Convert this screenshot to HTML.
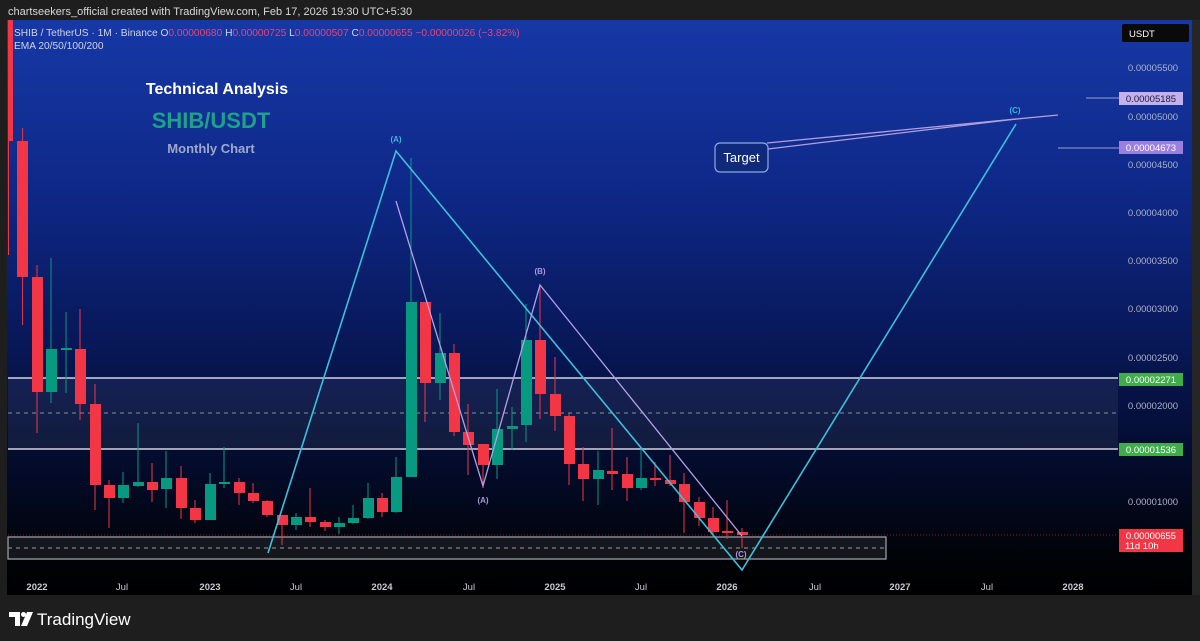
<!DOCTYPE html>
<html><head><meta charset="utf-8"><style>
html,body{margin:0;padding:0;background:#1e1e1e;width:1200px;height:641px;overflow:hidden;font-family:"Liberation Sans",sans-serif}
svg{position:absolute;left:0;top:0}
</style></head><body>
<svg width="1200" height="641" viewBox="0 0 1200 641" xmlns="http://www.w3.org/2000/svg" font-family="Liberation Sans, sans-serif">
<defs>
<linearGradient id="bg" x1="0" y1="0" x2="0" y2="1">
<stop offset="0" stop-color="#1638a6"/>
<stop offset="0.3" stop-color="#0e2887"/>
<stop offset="0.55" stop-color="#08185a"/>
<stop offset="0.8" stop-color="#030a26"/>
<stop offset="0.93" stop-color="#010308"/>
<stop offset="1" stop-color="#000"/>
</linearGradient>
</defs>
<rect x="0" y="0" width="1200" height="641" fill="#1e1e1e"/>
<text x="8" y="15" font-size="11" fill="#d8d8d8">chartseekers_official created with TradingView.com, Feb 17, 2026 19:30 UTC+5:30</text>
<rect x="7" y="20" width="1185" height="575" fill="url(#bg)"/>
<rect x="1192" y="20" width="8" height="575" fill="#262626"/>

<rect x="8" y="378" width="1110" height="71" fill="#ffffff" fill-opacity="0.06"/>
<line x1="8" y1="378" x2="1118" y2="378" stroke="#d0d4e0" stroke-width="1.6"/>
<line x1="8" y1="449" x2="1118" y2="449" stroke="#d0d4e0" stroke-width="1.6"/>
<line x1="8" y1="413" x2="1118" y2="413" stroke="#8a90a8" stroke-width="1" stroke-dasharray="4,4"/>
<rect x="8" y="537" width="878" height="22" fill="#ffffff" fill-opacity="0.08" stroke="#9a9ea8" stroke-width="1.3"/>
<line x1="8" y1="548" x2="886" y2="548" stroke="#9a9ea8" stroke-width="1" stroke-dasharray="4,4"/>
<line x1="8" y1="535" x2="1118" y2="535" stroke="#f23645" stroke-opacity="0.5" stroke-width="1" stroke-dasharray="1,2"/>

<g id="c">
<line x1="8.5" y1="20" x2="8.5" y2="255" stroke="#f23645"/><rect x="8" y="20" width="5" height="121" fill="#f23645"/>
<line x1="22.6" y1="128" x2="22.6" y2="325" stroke="#f23645"/><rect x="17" y="141" width="11" height="136" fill="#f23645"/>
<line x1="37" y1="265" x2="37" y2="433" stroke="#f23645"/><rect x="32" y="277" width="11" height="115" fill="#f23645"/>
<line x1="51" y1="258" x2="51" y2="403" stroke="#089981"/><rect x="46" y="349" width="11" height="43" fill="#089981"/>
<line x1="66" y1="312" x2="66" y2="393" stroke="#089981"/><rect x="61" y="348" width="11" height="2" fill="#089981"/>
<line x1="80" y1="309" x2="80" y2="420" stroke="#f23645"/><rect x="75" y="349" width="11" height="55" fill="#f23645"/>
<line x1="95" y1="384" x2="95" y2="510" stroke="#f23645"/><rect x="90" y="404" width="11" height="81" fill="#f23645"/>
<line x1="109" y1="480" x2="109" y2="528" stroke="#f23645"/><rect x="104" y="485" width="11" height="13" fill="#f23645"/>
<line x1="123" y1="472" x2="123" y2="503" stroke="#089981"/><rect x="118" y="485" width="11" height="13" fill="#089981"/>
<line x1="138" y1="423" x2="138" y2="487" stroke="#089981"/><rect x="133" y="482" width="11" height="4" fill="#089981"/>
<line x1="152" y1="463" x2="152" y2="502" stroke="#f23645"/><rect x="147" y="482" width="11" height="8" fill="#f23645"/>
<line x1="166" y1="451" x2="166" y2="508" stroke="#089981"/><rect x="161" y="478" width="11" height="11" fill="#089981"/>
<line x1="181" y1="466" x2="181" y2="519" stroke="#f23645"/><rect x="176" y="478" width="11" height="30" fill="#f23645"/>
<line x1="195" y1="500" x2="195" y2="523" stroke="#f23645"/><rect x="190" y="508" width="11" height="12" fill="#f23645"/>
<line x1="210" y1="473" x2="210" y2="520" stroke="#089981"/><rect x="205" y="484" width="11" height="36" fill="#089981"/>
<line x1="224" y1="447" x2="224" y2="488" stroke="#089981"/><rect x="219" y="482" width="11" height="2" fill="#089981"/>
<line x1="239" y1="478" x2="239" y2="505" stroke="#f23645"/><rect x="234" y="482" width="11" height="11" fill="#f23645"/>
<line x1="253" y1="483" x2="253" y2="503" stroke="#f23645"/><rect x="248" y="493" width="11" height="8" fill="#f23645"/>
<line x1="267" y1="500" x2="267" y2="517" stroke="#f23645"/><rect x="262" y="501" width="11" height="14" fill="#f23645"/>
<line x1="282" y1="515" x2="282" y2="545" stroke="#f23645"/><rect x="277" y="515" width="11" height="10" fill="#f23645"/>
<line x1="296" y1="513" x2="296" y2="530" stroke="#089981"/><rect x="291" y="517" width="11" height="8" fill="#089981"/>
<line x1="310" y1="488" x2="310" y2="527" stroke="#f23645"/><rect x="305" y="517" width="11" height="5" fill="#f23645"/>
<line x1="325" y1="520" x2="325" y2="531" stroke="#f23645"/><rect x="320" y="522" width="11" height="5" fill="#f23645"/>
<line x1="339" y1="517" x2="339" y2="534" stroke="#089981"/><rect x="334" y="523" width="11" height="4" fill="#089981"/>
<line x1="353" y1="505" x2="353" y2="524" stroke="#089981"/><rect x="348" y="518" width="11" height="5" fill="#089981"/>
<line x1="368" y1="483" x2="368" y2="519" stroke="#089981"/><rect x="363" y="498" width="11" height="20" fill="#089981"/>
<line x1="382" y1="493" x2="382" y2="517" stroke="#f23645"/><rect x="377" y="498" width="11" height="14" fill="#f23645"/>
<line x1="396" y1="457" x2="396" y2="513" stroke="#089981"/><rect x="391" y="477" width="11" height="35" fill="#089981"/>
<line x1="411" y1="158" x2="411" y2="477" stroke="#089981"/><rect x="406" y="302" width="11" height="175" fill="#089981"/>
<line x1="425" y1="303" x2="425" y2="422" stroke="#f23645"/><rect x="420" y="302" width="11" height="81" fill="#f23645"/>
<line x1="440" y1="313" x2="440" y2="400" stroke="#089981"/><rect x="435" y="353" width="11" height="30" fill="#089981"/>
<line x1="454" y1="344" x2="454" y2="436" stroke="#f23645"/><rect x="449" y="353" width="11" height="79" fill="#f23645"/>
<line x1="468" y1="404" x2="468" y2="475" stroke="#f23645"/><rect x="463" y="432" width="11" height="13" fill="#f23645"/>
<line x1="483" y1="444" x2="483" y2="488" stroke="#f23645"/><rect x="478" y="444" width="11" height="21" fill="#f23645"/>
<line x1="497" y1="389" x2="497" y2="479" stroke="#089981"/><rect x="492" y="429" width="11" height="36" fill="#089981"/>
<line x1="512" y1="407" x2="512" y2="450" stroke="#089981"/><rect x="507" y="426" width="11" height="3" fill="#089981"/>
<line x1="526" y1="304" x2="526" y2="442" stroke="#089981"/><rect x="521" y="340" width="11" height="85" fill="#089981"/>
<line x1="540" y1="285" x2="540" y2="419" stroke="#f23645"/><rect x="535" y="340" width="11" height="54" fill="#f23645"/>
<line x1="555" y1="357" x2="555" y2="431" stroke="#f23645"/><rect x="550" y="394" width="11" height="22" fill="#f23645"/>
<line x1="569" y1="413" x2="569" y2="485" stroke="#f23645"/><rect x="564" y="416" width="11" height="48" fill="#f23645"/>
<line x1="583" y1="447" x2="583" y2="501" stroke="#f23645"/><rect x="578" y="464" width="11" height="15" fill="#f23645"/>
<line x1="598" y1="451" x2="598" y2="505" stroke="#089981"/><rect x="593" y="470" width="11" height="9" fill="#089981"/>
<line x1="612" y1="428" x2="612" y2="490" stroke="#f23645"/><rect x="607" y="471" width="11" height="3" fill="#f23645"/>
<line x1="627" y1="457" x2="627" y2="501" stroke="#f23645"/><rect x="622" y="474" width="11" height="14" fill="#f23645"/>
<line x1="641" y1="447" x2="641" y2="490" stroke="#089981"/><rect x="636" y="478" width="11" height="10" fill="#089981"/>
<line x1="655" y1="462" x2="655" y2="486" stroke="#f23645"/><rect x="650" y="478" width="11" height="2" fill="#f23645"/>
<line x1="670" y1="455" x2="670" y2="486" stroke="#f23645"/><rect x="665" y="480" width="11" height="4" fill="#f23645"/>
<line x1="684" y1="473" x2="684" y2="533" stroke="#f23645"/><rect x="679" y="484" width="11" height="18" fill="#f23645"/>
<line x1="699" y1="497" x2="699" y2="526" stroke="#f23645"/><rect x="694" y="502" width="11" height="16" fill="#f23645"/>
<line x1="713" y1="507" x2="713" y2="534" stroke="#f23645"/><rect x="708" y="518" width="11" height="14" fill="#f23645"/>
<line x1="727" y1="500" x2="727" y2="539" stroke="#f23645"/><rect x="722" y="531" width="11" height="2" fill="#f23645"/>
<line x1="742" y1="528" x2="742" y2="548" stroke="#f23645"/><rect x="737" y="532" width="11" height="3" fill="#f23645"/>
</g>

<polyline points="268,553 396,151 742,570 1016,124" fill="none" stroke="#3cc0dc" stroke-width="1.6"/>
<polyline points="396,201 483,486 540,285 742,536" fill="none" stroke="#b3a0e8" stroke-width="1.3"/>
<g font-size="8" font-weight="bold" text-anchor="middle">
<text x="396" y="142" fill="#3cb6e0">(A)</text>
<text x="1015" y="113" fill="#3cb6e0">(C)</text>
<text x="540" y="274" fill="#a89ad8">(B)</text>
<text x="483" y="503" fill="#a89ad8">(A)</text>
<text x="741" y="557" fill="#a89ad8">(C)</text>
</g>

<line x1="767" y1="143" x2="1058" y2="115" stroke="#b39ddb" stroke-width="1.3"/>
<line x1="768" y1="149" x2="1016" y2="119" stroke="#b39ddb" stroke-width="1.3"/>
<rect x="715" y="143" width="53" height="29" rx="5" fill="#0f2a7a" stroke="#8fa8e8" stroke-width="1.2"/>
<text x="741.5" y="162" font-size="13" fill="#ffffff" text-anchor="middle">Target</text>

<text x="217" y="94" font-size="16" font-weight="bold" fill="#ffffff" text-anchor="middle">Technical Analysis</text>
<text x="211" y="128" font-size="22" font-weight="bold" fill="#1fa08a" text-anchor="middle">SHIB/USDT</text>
<text x="211" y="153" font-size="13" font-weight="bold" fill="#a0a8c8" text-anchor="middle">Monthly Chart</text>

<text x="14" y="36" font-size="10.2" fill="#d0d4e4">SHIB / TetherUS · 1M · Binance  <tspan fill="#d0d4e4">O</tspan><tspan fill="#e0467c">0.00000680</tspan>  <tspan fill="#d0d4e4">H</tspan><tspan fill="#e0467c">0.00000725</tspan>  <tspan fill="#d0d4e4">L</tspan><tspan fill="#e0467c">0.00000507</tspan>  <tspan fill="#d0d4e4">C</tspan><tspan fill="#e0467c">0.00000655  −0.00000026 (−3.82%)</tspan></text>
<text x="14" y="49" font-size="10.2" fill="#d0d4e4">EMA 20/50/100/200</text>

<rect x="1122" y="24" width="67" height="18" rx="2" fill="#0a0a0a"/>
<text x="1129" y="37" font-size="9.5" fill="#ffffff">USDT</text>
<g font-size="9.5" fill="#aeb4c8" text-anchor="middle">
<text x="1153" y="71">0.00005500</text>
<text x="1153" y="120">0.00005000</text>
<text x="1153" y="168">0.00004500</text>
<text x="1153" y="216">0.00004000</text>
<text x="1153" y="264">0.00003500</text>
<text x="1153" y="312">0.00003000</text>
<text x="1153" y="361">0.00002500</text>
<text x="1153" y="409">0.00002000</text>
<text x="1153" y="505">0.00001000</text>
</g>
<line x1="1086" y1="98" x2="1119" y2="98" stroke="#9aa0d0"/>
<line x1="1058" y1="148" x2="1119" y2="148" stroke="#9aa0d0"/>
<rect x="1119" y="92" width="64" height="13" fill="#c4b0ec"/>
<text x="1151" y="102" font-size="9.5" fill="#1a1a3a" text-anchor="middle">0.00005185</text>
<rect x="1119" y="141" width="64" height="13" fill="#9a7ee0"/>
<text x="1151" y="151" font-size="9.5" fill="#ffffff" text-anchor="middle">0.00004673</text>
<rect x="1119" y="373" width="64" height="13" fill="#3fae4a"/>
<text x="1151" y="383" font-size="9.5" fill="#ffffff" text-anchor="middle">0.00002271</text>
<rect x="1119" y="443" width="64" height="13" fill="#3fae4a"/>
<text x="1151" y="453" font-size="9.5" fill="#ffffff" text-anchor="middle">0.00001536</text>
<rect x="1119" y="529" width="64" height="23" fill="#f23645"/>
<text x="1151" y="539" font-size="9.5" fill="#ffffff" text-anchor="middle">0.00000655</text>
<text x="1125" y="549" font-size="9.5" fill="#ffffff">11d 10h</text>

<g font-size="9.5" fill="#c8ccd6" text-anchor="middle">
<text x="37" y="590" font-weight="bold">2022</text><text x="122" y="590">Jul</text>
<text x="210" y="590" font-weight="bold">2023</text><text x="296" y="590">Jul</text>
<text x="382" y="590" font-weight="bold">2024</text><text x="469" y="590">Jul</text>
<text x="555" y="590" font-weight="bold">2025</text><text x="641" y="590">Jul</text>
<text x="727" y="590" font-weight="bold">2026</text><text x="815" y="590">Jul</text>
<text x="900" y="590" font-weight="bold">2027</text><text x="987" y="590">Jul</text>
<text x="1073" y="590" font-weight="bold">2028</text>
</g>

<g fill="#ffffff">
<path d="M9 612h11v14h-5v-9h-6z"/>
<circle cx="23.5" cy="614.5" r="2.5"/>
<path d="M27 612h6l-6 14h-6z"/>
</g>
<text x="37" y="625" font-size="17" fill="#ffffff">TradingView</text>
</svg>
</body></html>
